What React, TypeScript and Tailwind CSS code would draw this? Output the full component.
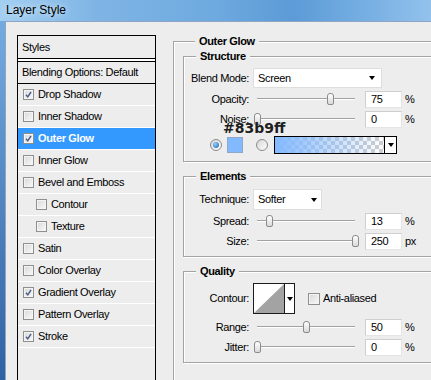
import React from "react";

function Check({ on, size = 11 }: { on?: boolean; size?: number }) {
  return (
    <span
      className="relative block shrink-0 border border-[#8e8f8f] bg-gradient-to-br from-[#d8d8d8] to-[#fafafa] shadow-[inset_0_0_0_1px_#f4f4f4]"
      style={{ width: size, height: size }}
    >
      {on && (
        <svg viewBox="0 0 10 10" className="absolute left-0 top-0 h-full w-full">
          <path d="M2.2 5.2 L4.2 7.6 L7.8 2.2" fill="none" stroke="#4a5d8c" strokeWidth="1.6" />
        </svg>
      )}
    </span>
  );
}

function Item({ label, on, sub, active }: { label: string; on?: boolean; sub?: boolean; active?: boolean }) {
  return (
    <div
      className={
        "flex h-[22px] items-center gap-[4px] border-b border-white " +
        (sub ? "pl-[18px] " : "pl-[5px] ") +
        (active ? "bg-[#3399ff] font-bold text-white" : "")
      }
    >
      <Check on={on} />
      <span>{label}</span>
    </div>
  );
}

function Label({ children }: { children: React.ReactNode }) {
  return <span className="w-[65px] shrink-0 text-right">{children}</span>;
}

function Arrow() {
  return <span className="h-0 w-0 border-x-[3.5px] border-t-[4px] border-x-transparent border-t-black" />;
}

function Slider({ pct }: { pct: number }) {
  return (
    <div className="relative ml-[8px] h-[14px] w-[98px] shrink-0">
      <div className="absolute left-0 right-0 top-[6px] h-[2px] border-t border-[#a2a2a2] bg-white" />
      <div
        className="absolute top-[1px] h-[12px] w-[7px] rounded-t-[3px] rounded-b-[2px] border border-[#8b8b8b] bg-gradient-to-b from-white to-[#d9d9d9]"
        style={{ left: (pct * 98) / 100 - 3.5 }}
      />
    </div>
  );
}

function NumBox({ v }: { v: string }) {
  return (
    <div className="ml-[10px] flex h-[17px] w-[37px] shrink-0 items-center border border-[#e4e4e4] border-l-[#cfcfcf] border-t-[#cfcfcf] bg-white pl-[5px]">
      {v}
    </div>
  );
}

function SliderRow({ label, pct, v, unit = "%" }: { label: string; pct: number; v: string; unit?: string }) {
  return (
    <div className="flex h-[20px] items-center">
      <Label>{label}</Label>
      <Slider pct={pct} />
      <NumBox v={v} />
      <span className="ml-[3px]">{unit}</span>
    </div>
  );
}

function Radio({ on }: { on?: boolean }) {
  return (
    <span className="flex h-[12px] w-[12px] shrink-0 items-center justify-center rounded-full border border-[#8a8a8a] bg-gradient-to-br from-[#d6d6d6] to-white">
      {on && <span className="h-[6px] w-[6px] rounded-full bg-[radial-gradient(circle_at_35%_35%,#8fd0ff,#1a62a8)]" />}
    </span>
  );
}

const box = "border border-[#a3a3a3] shadow-[inset_1px_1px_0_#fff,1px_1px_0_#fff]";
const legend = "ml-[12px] bg-[#ededed] px-[4px] font-bold leading-[13px]";

export default function App() {
  return (
    <div className="relative flex h-[380px] w-[431px] flex-col overflow-hidden font-['Liberation_Sans',Arial,sans-serif] text-[11px] leading-[13px] tracking-[-0.35px] text-black">
      <header className="flex h-[21px] shrink-0 items-center bg-[linear-gradient(90deg,#a3cff1_0%,#7fb5e5_22%,#6ea9df_50%,#5c9bd7_68%,#78b0e3_86%,#93c2ec_100%)] pl-[6px] text-[12px] tracking-normal [text-shadow:0_0_6px_rgba(255,255,255,0.9)]">
        Layer Style
      </header>

      <div className="flex min-h-0 flex-1">
        <div className="w-[5px] shrink-0 bg-gradient-to-b from-[#74abdf] to-[#2f62a3]" />
        <div className="flex min-w-0 flex-1 border-l border-t border-[#8ea6c3] bg-[#ededed] pl-[11px] pt-[13px]">
          {/* styles list */}
          <div className="flex w-[139px] shrink-0 flex-col self-stretch border border-b-0 border-black">
            <div className="flex h-[22px] items-center pl-[4px]">Styles</div>
            <div className="h-[4px] border-y border-black bg-white" />
            <div className="flex h-[22px] items-center border-b border-black pl-[4px]">Blending Options: Default</div>
            <Item label="Drop Shadow" on />
            <Item label="Inner Shadow" />
            <Item label="Outer Glow" on active />
            <Item label="Inner Glow" />
            <Item label="Bevel and Emboss" />
            <Item label="Contour" sub />
            <Item label="Texture" sub />
            <Item label="Satin" />
            <Item label="Color Overlay" />
            <Item label="Gradient Overlay" on />
            <Item label="Pattern Overlay" />
            <Item label="Stroke" on />
          </div>

          {/* settings */}
          <fieldset className={"ml-[17px] h-[400px] w-[290px] shrink-0 pl-[9px] " + box}>
            <legend className={legend}>Outer Glow</legend>

            <fieldset className={"mt-[2px] w-[270px] pb-[7px] pt-[5px] " + box}>
              <legend className={legend}>Structure</legend>
              <div className="flex h-[20px] items-center">
                <Label>Blend Mode:</Label>
                <div className="ml-[4px] flex h-[20px] w-[129px] items-center justify-between border border-[#dedede] bg-white pl-[4px] pr-[6px]">
                  <span>Screen</span>
                  <Arrow />
                </div>
              </div>
              <div className="mt-[1px]">
                <SliderRow label="Opacity:" pct={75} v="75" />
                <SliderRow label="Noise:" pct={0} v="0" />
              </div>
              <div className="mt-[7px] flex h-[18px] items-center pl-[26px]">
                <Radio on />
                <span className="ml-[5px] h-[16px] w-[16px] border border-[#8fa8c8] bg-[#83b9ff]" />
                <span className="ml-[13px]">
                  <Radio />
                </span>
                <div className="ml-[6px] flex h-[18px] w-[123px] border border-black">
                  <span className="flex-1 bg-[linear-gradient(to_right,#83b9ff,rgba(131,185,255,0)),repeating-conic-gradient(#cdcdcd_0%_25%,#ffffff_0%_50%)] [background-size:100%_100%,8px_8px]" />
                  <span className="flex w-[12px] items-center justify-center border-l border-black bg-white">
                    <Arrow />
                  </span>
                </div>
              </div>
            </fieldset>

            <fieldset className={"mt-[8px] w-[270px] pb-[5px] pt-[6px] " + box}>
              <legend className={legend}>Elements</legend>
              <div className="flex h-[21px] items-center">
                <Label>Technique:</Label>
                <div className="ml-[4px] flex h-[21px] w-[69px] items-center justify-between border border-[#dedede] bg-white pl-[4px] pr-[4px]">
                  <span>Softer</span>
                  <Arrow />
                </div>
              </div>
              <div className="mt-[1px]">
                <SliderRow label="Spread:" pct={13} v="13" />
                <SliderRow label="Size:" pct={100} v="250" unit="px" />
              </div>
            </fieldset>

            <fieldset className={"mt-[8px] w-[270px] pb-[5px] pt-[5px] " + box}>
              <legend className={legend}>Quality</legend>
              <div className="flex h-[31px] items-center">
                <Label>Contour:</Label>
                <div className="ml-[4px] flex h-[31px] w-[42px] border border-[#1c1c1c] bg-white">
                  <svg width="30" height="29" viewBox="0 0 30 29" className="shrink-0">
                    <polygon points="0,29 30,0 30,29" fill="#a3a3a3" />
                  </svg>
                  <span className="flex flex-1 items-center justify-center border-l border-[#1c1c1c]">
                    <Arrow />
                  </span>
                </div>
                <span className="ml-[13px]">
                  <Check size={12} />
                </span>
                <span className="ml-[3px]">Anti-aliased</span>
              </div>
              <div className="mt-[3px]">
                <SliderRow label="Range:" pct={50} v="50" />
                <SliderRow label="Jitter:" pct={0} v="0" />
              </div>
            </fieldset>
          </fieldset>
        </div>
      </div>

      <span className="absolute left-[223px] top-[121px] font-['DejaVu_Sans',sans-serif] text-[14px] font-bold leading-[14px] tracking-normal text-[#1e1e1e]">
        #83b9ff
      </span>
    </div>
  );
}
